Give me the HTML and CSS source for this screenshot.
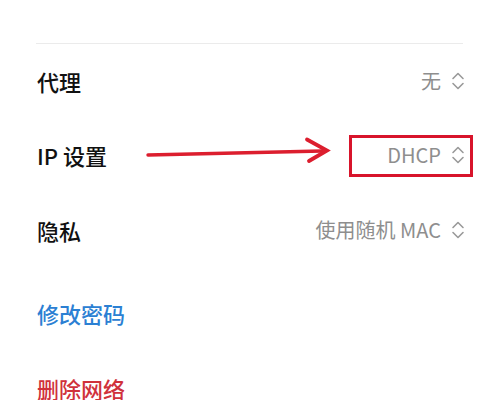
FILE: index.html
```html
<!DOCTYPE html>
<html lang="zh">
<head>
<meta charset="utf-8">
<link rel="stylesheet" href="styles.css">
</head>
<body>
<div class="screen">
  <div class="top-space"></div>
  <div class="list">
    <div class="divider"></div>
    <div class="row r1">
      <span class="label">代理</span>
      <span class="value">无<svg class="chev" viewBox="0 0 14 20"><path d="M2 7.5 L7 2.5 L12 7.5 M2 12.5 L7 17.5 L12 12.5" fill="none" stroke="#9a9a9a" stroke-width="1.6" stroke-linecap="round" stroke-linejoin="round"/></svg></span>
    </div>
    <div class="row r2">
      <span class="label">IP 设置</span>
      <span class="value">DHCP<svg class="chev" viewBox="0 0 14 20"><path d="M2 7.5 L7 2.5 L12 7.5 M2 12.5 L7 17.5 L12 12.5" fill="none" stroke="#9a9a9a" stroke-width="1.6" stroke-linecap="round" stroke-linejoin="round"/></svg></span>
    </div>
    <div class="row r3">
      <span class="label">隐私</span>
      <span class="value">使用随机 MAC<svg class="chev" viewBox="0 0 14 20"><path d="M2 7.5 L7 2.5 L12 7.5 M2 12.5 L7 17.5 L12 12.5" fill="none" stroke="#9a9a9a" stroke-width="1.6" stroke-linecap="round" stroke-linejoin="round"/></svg></span>
    </div>
    <div class="row r4">
      <span class="label link">修改密码</span>
    </div>
    <div class="row r5">
      <span class="label danger">删除网络</span>
    </div>
  </div>
  <svg class="arrow" viewBox="0 0 500 400" width="500" height="400">
    <path d="M148 155 L322 151" stroke="#dc1e2e" stroke-width="3.4" stroke-linecap="round" fill="none"/>
    <path d="M307 139.5 L327 150.5 L309 161" stroke="#dc1e2e" stroke-width="3.8" stroke-linecap="round" stroke-linejoin="miter" fill="none"/>
  </svg>
  <div class="highlight"></div>
</div>
</body>
</html>
```
FILE: styles.css
```css
html, body {
  margin: 0;
  padding: 0;
  background: #ffffff;
}
.screen {
  position: relative;
  width: 500px;
  height: 400px;
  overflow: hidden;
  font-family: "Noto Sans CJK SC", "Noto Sans", sans-serif;
}
.top-space {
  height: 43px;
}
.list {
  padding: 0 37px 0 37px;
  display: flex;
  flex-direction: column;
}
.divider {
  height: 1px;
  background: #ebebeb;
  margin-left: -1px;
}
.row {
  display: flex;
  align-items: center;
  justify-content: space-between;
}
.r1 { height: 74px; }
.r2 { height: 74px; }
.r3 { height: 76px; }
.r4 { height: 90px; }
.r5 { height: 60px; }
.label {
  font-size: 22px;
  color: #111111;
  line-height: 1;
  font-weight: 500;
}
.label.link {
  color: #2b80d3;
}
.label.danger {
  color: #d0313b;
}
.value {
  display: flex;
  align-items: center;
  gap: 10px;
  font-size: 20px;
  color: #8e8e8e;
  line-height: 1;
  margin-right: -2px;
}
.chev {
  width: 14px;
  height: 20px;
}
.arrow {
  position: absolute;
  left: 0;
  top: 0;
}
.highlight {
  position: absolute;
  left: 349px;
  top: 135px;
  width: 118px;
  height: 36px;
  border: 3px solid #d8142b;
}
```
